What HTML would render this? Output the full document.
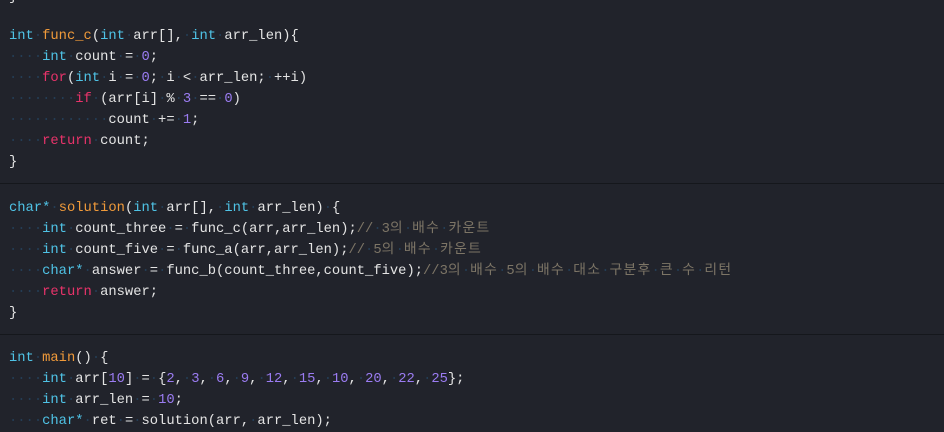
<!DOCTYPE html>
<html><head><meta charset="utf-8"><style>
html,body{margin:0;padding:0;background:#21232b;width:944px;height:424px;overflow:hidden}
.l{position:absolute;left:9px;height:21px;line-height:21px;white-space:pre;font-family:"Liberation Mono","Noto Sans CJK KR",monospace;font-size:13.8px;color:#e4e4e4}
b{font-weight:normal;color:#243d55}
.t{color:#4fc3e6}.f{color:#f09a3a}.k{color:#e8336a}.n{color:#9b7cf2}.c{color:#7d7566}
.c i{font-style:normal;letter-spacing:1.3px}
.sep{position:absolute;left:0;width:944px;height:1px;background:#15171c}
</style></head><body>
<div class="l" style="top:-13px">}</div>
<div class="l" style="top:26px"><span class="t">int</span><b>·</b><span class="f">func_c</span>(<span class="t">int</span><b>·</b>arr[],<b>·</b><span class="t">int</span><b>·</b>arr_len){</div>
<div class="l" style="top:47px"><b>····</b><span class="t">int</span><b>·</b>count<b>·</b>=<b>·</b><span class="n">0</span>;</div>
<div class="l" style="top:68px"><b>····</b><span class="k">for</span>(<span class="t">int</span><b>·</b>i<b>·</b>=<b>·</b><span class="n">0</span>;<b>·</b>i<b>·</b>&lt;<b>·</b>arr_len;<b>·</b>++i)</div>
<div class="l" style="top:89px"><b>········</b><span class="k">if</span><b>·</b>(arr[i]<b>·</b>%<b>·</b><span class="n">3</span><b>·</b>==<b>·</b><span class="n">0</span>)</div>
<div class="l" style="top:110px"><b>············</b>count<b>·</b>+=<b>·</b><span class="n">1</span>;</div>
<div class="l" style="top:131px"><b>····</b><span class="k">return</span><b>·</b>count;</div>
<div class="l" style="top:152px">}</div>
<div class="sep" style="top:183px"></div>
<div class="l" style="top:198px"><span class="t">char*</span><b>·</b><span class="f">solution</span>(<span class="t">int</span><b>·</b>arr[],<b>·</b><span class="t">int</span><b>·</b>arr_len)<b>·</b>{</div>
<div class="l" style="top:219px"><b>····</b><span class="t">int</span><b>·</b>count_three<b>·</b>=<b>·</b>func_c(arr,arr_len);<span class="c">//<b>·</b>3<i>의</i><b>·</b><i>배수</i><b>·</b><i>카운트</i></span></div>
<div class="l" style="top:240px"><b>····</b><span class="t">int</span><b>·</b>count_five<b>·</b>=<b>·</b>func_a(arr,arr_len);<span class="c">//<b>·</b>5<i>의</i><b>·</b><i>배수</i><b>·</b><i>카운트</i></span></div>
<div class="l" style="top:261px"><b>····</b><span class="t">char*</span><b>·</b>answer<b>·</b>=<b>·</b>func_b(count_three,count_five);<span class="c">//3<i>의</i><b>·</b><i>배수</i><b>·</b>5<i>의</i><b>·</b><i>배수</i><b>·</b><i>대소</i><b>·</b><i>구분후</i><b>·</b><i>큰</i><b>·</b><i>수</i><b>·</b><i>리턴</i></span></div>
<div class="l" style="top:282px"><b>····</b><span class="k">return</span><b>·</b>answer;</div>
<div class="l" style="top:303px">}</div>
<div class="sep" style="top:334px"></div>
<div class="l" style="top:348px"><span class="t">int</span><b>·</b><span class="f">main</span>()<b>·</b>{</div>
<div class="l" style="top:369px"><b>····</b><span class="t">int</span><b>·</b>arr[<span class="n">10</span>]<b>·</b>=<b>·</b>{<span class="n">2</span>,<b>·</b><span class="n">3</span>,<b>·</b><span class="n">6</span>,<b>·</b><span class="n">9</span>,<b>·</b><span class="n">12</span>,<b>·</b><span class="n">15</span>,<b>·</b><span class="n">10</span>,<b>·</b><span class="n">20</span>,<b>·</b><span class="n">22</span>,<b>·</b><span class="n">25</span>};</div>
<div class="l" style="top:390px"><b>····</b><span class="t">int</span><b>·</b>arr_len<b>·</b>=<b>·</b><span class="n">10</span>;</div>
<div class="l" style="top:411px"><b>····</b><span class="t">char*</span><b>·</b>ret<b>·</b>=<b>·</b>solution(arr,<b>·</b>arr_len);</div>
</body></html>
